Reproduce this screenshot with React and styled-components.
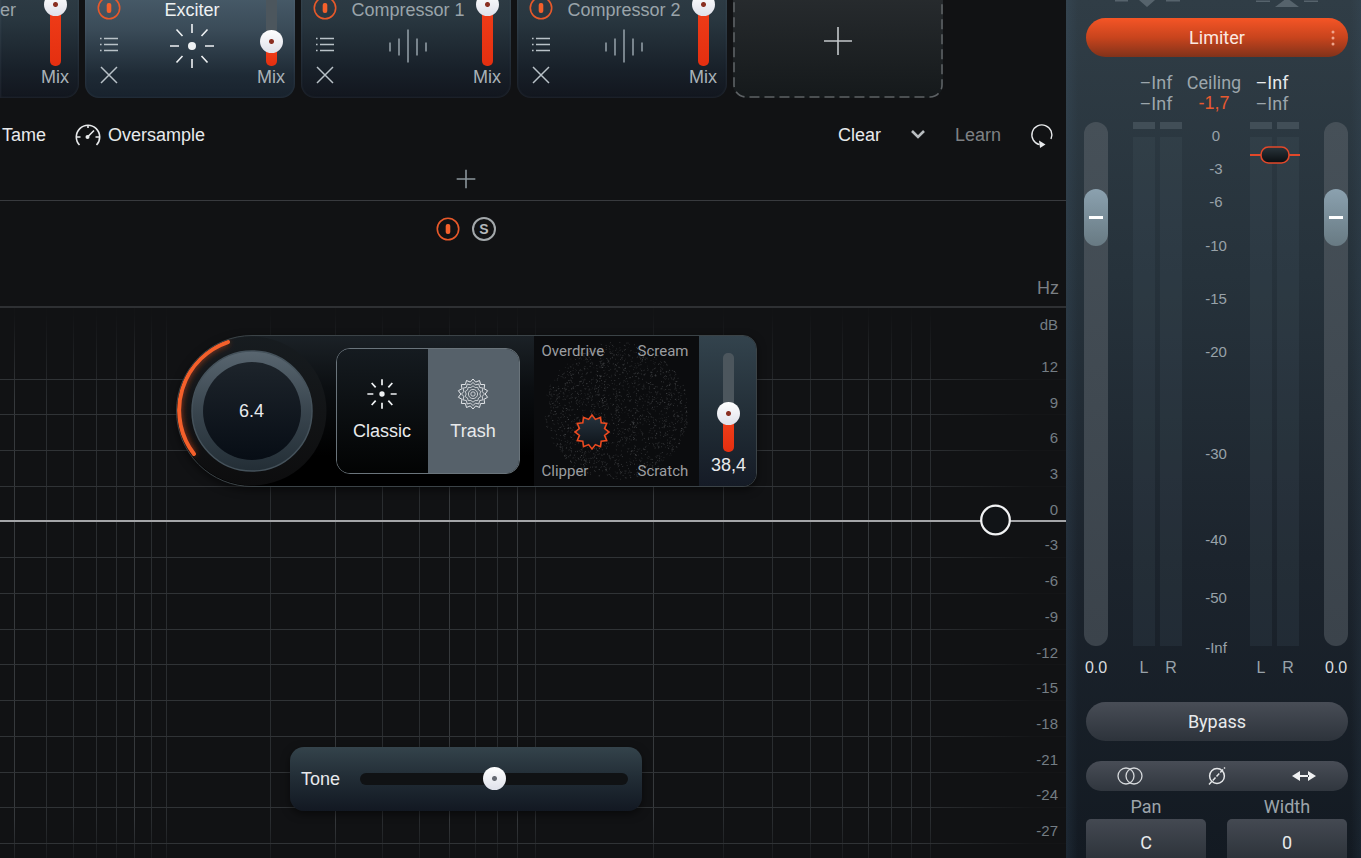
import React, { useState } from "react";
import styled, { createGlobalStyle } from "styled-components";

const GlobalStyle = createGlobalStyle`
  * {
    box-sizing: border-box;
  }

  body {
    margin: 0;
    background: #111214;
    color: #e8eaec;
    font-family: "Liberation Sans", Arial, sans-serif;
    font-size: 18px;
    line-height: 20px;
    overflow: hidden;
  }

  button,
  input {
    font: inherit;
    color: inherit;
  }

  button {
    padding: 0;
    border: none;
    background: none;
    cursor: pointer;
  }

  svg {
    display: block;
  }
`;

const Shell = styled.div`
  display: grid;
  grid-template-columns: minmax(0, 1fr) 295px;
  height: 100vh;
  overflow: hidden;
`;

const Main = styled.main`
  display: flex;
  flex-direction: column;
  min-width: 0;
  overflow: hidden;
`;

/* ---------- module chain ---------- */

const Chain = styled.div`
  display: flex;
  flex: none;
  gap: 6px;
  margin-top: -16px;
`;

const Card = styled.section`
  display: flex;
  flex: none;
  justify-content: space-between;
  width: ${(p) => (p.$clipped ? "79px" : "210px")};
  height: 114px;
  padding: 0 8px 0 ${(p) => (p.$clipped ? "0" : "12px")};
  border-radius: ${(p) => (p.$clipped ? "0 0 14px 0" : "14px")};
  box-shadow: inset 0 0 2px 1px rgba(120, 140, 155, 0.12);
  background: ${(p) =>
    p.$active
      ? "linear-gradient(#4c606e, #3a4b58 40%, #1e2a35 80%, #18222d)"
      : "linear-gradient(#303d46, #293740 30%, #182029 75%, #12161e)"};
  color: ${(p) => (p.$active ? "#eef1f3" : "#9aa4aa")};
`;

const CardActions = styled.div`
  display: flex;
  flex-direction: column;
  gap: 10px;
  width: 24px;
  margin-right: 8px;
  padding-top: 12px;
  color: #b9c2c8;
`;

const CardBody = styled.div`
  display: flex;
  flex: ${(p) => (p.$clipped ? "none" : "1")};
  flex-direction: column;
  align-items: center;
  gap: 2px;
  padding-top: 16px;
  white-space: nowrap;
`;

const CardMix = styled.label`
  display: flex;
  flex: none;
  flex-direction: column;
  align-items: center;
  gap: 1px;
  width: 32px;
  padding-top: 9px;
  color: #a9b2b8;
`;

const AddCard = styled.button`
  position: relative;
  display: grid;
  place-items: center;
  flex: none;
  width: 210px;
  height: 114px;
  border-radius: 14px;
  background: linear-gradient(#292d30, #15191b);
  color: #c3c7ca;
`;

const DashedFrame = styled.svg`
  position: absolute;
  inset: 0;
`;

/* ---------- sliders ---------- */

const VerticalRange = styled.input.attrs({ type: "range" })`
  appearance: none;
  writing-mode: vertical-lr;
  direction: rtl;
  width: 23px;
  height: ${(p) => p.$length}px;
  margin: 0;
  background: none;

  &::-webkit-slider-runnable-track {
    width: 11px;
    height: 100%;
    border-radius: 5px;
    background: linear-gradient(
      to top,
      #e42f10,
      #f2401a ${(p) => p.value}%,
      #4c565d ${(p) => p.value}%
    );
  }

  &::-webkit-slider-thumb {
    appearance: none;
    width: 23px;
    height: 23px;
    margin-left: -6px;
    border-radius: 50%;
    background: radial-gradient(circle, #8a2f22 2px, transparent 3px),
      linear-gradient(#ffffff, #dfe1ea);
  }
`;

const ToneRange = styled.input.attrs({ type: "range" })`
  appearance: none;
  flex: 1;
  min-width: 0;
  height: 24px;
  margin: 0;
  background: none;

  &::-webkit-slider-runnable-track {
    height: 12px;
    border-radius: 6px;
    background: #101214;
  }

  &::-webkit-slider-thumb {
    appearance: none;
    width: 23px;
    height: 23px;
    margin-top: -6px;
    border-radius: 50%;
    background: radial-gradient(circle, #666a72 2px, transparent 3px),
      linear-gradient(#ffffff, #dfe1ea);
  }
`;

const FaderRange = styled.input.attrs({ type: "range" })`
  appearance: none;
  writing-mode: vertical-lr;
  direction: rtl;
  width: 24px;
  height: 524px;
  margin: 0;
  border-radius: 12px;
  background: linear-gradient(#465058, #3b434b);

  &::-webkit-slider-thumb {
    appearance: none;
    width: 24px;
    height: 57px;
    border-radius: 12px;
    background: linear-gradient(#ffffff, #ffffff) center / 14px 3px no-repeat,
      linear-gradient(#8ba1af, #687a83);
  }
`;

/* ---------- toolbar and band header ---------- */

const Toolbar = styled.div`
  display: flex;
  flex: none;
  align-items: center;
  height: 60px;
  padding: 13px 12px 0 2px;
`;

const ToolButton = styled.button`
  display: flex;
  align-items: center;
  gap: 7px;
  margin-right: 29px;
  color: ${(p) => (p.$dim ? "#7e8184" : "#e8eaec")};
`;

const Spacer = styled.div`
  flex: 1;
`;

const AddBandRow = styled.div`
  display: grid;
  place-items: center;
  flex: none;
  height: 43px;
  padding-right: 134px;
  border-bottom: 1px solid #383a3e;
  color: #8b959b;
`;

const BandHeader = styled.div`
  position: relative;
  display: flex;
  flex: none;
  justify-content: center;
  gap: 12px;
  height: 107px;
  padding: 16px 134px 0 0;
  border-bottom: 2px solid #2e3033;
`;

const SoloButton = styled.button`
  width: 24px;
  height: 24px;
  border: 2px solid #a3a8ab;
  border-radius: 50%;
  color: #b4b8bb;
  font-size: 14px;
  font-weight: bold;
  line-height: 20px;
`;

const Unit = styled.span`
  position: absolute;
  right: 7px;
  bottom: 8px;
  color: #7b7f84;
`;

/* ---------- graph ---------- */

const Graph = styled.div`
  position: relative;
  display: grid;
  grid-template-columns: minmax(0, 1fr) 134px;
  flex: 1;
`;

const GridLines = styled.svg`
  position: absolute;
  inset: 0;
`;

const Plot = styled.div`
  position: relative;
  display: flex;
  flex-direction: column;
  align-items: center;
  justify-content: space-between;
  padding: 27px 0 47px;
`;

const DbScale = styled.div`
  position: relative;
  padding: 7px 8px 0 0;
  color: #747d84;
  font-size: 15px;
  text-align: right;
`;

const DbSteps = styled.div`
  display: grid;
  grid-template-rows: repeat(14, 1fr);
  align-items: center;
  height: 500px;
  margin-top: 14px;
`;

const ExciterPanel = styled.section`
  display: flex;
  align-items: center;
  flex: none;
  height: 152px;
  border: 1px solid #3b4347;
  border-radius: 76px 14px 14px 76px;
  overflow: hidden;
  background: linear-gradient(#1b2126, #0b0e11 35%, #000000 80%);
  box-shadow: 0 3px 8px rgba(0, 0, 0, 0.5);
`;

const Knob = styled.div`
  position: relative;
  display: grid;
  place-items: center;
  width: 150px;
  height: 150px;
`;

const KnobFace = styled.svg`
  position: absolute;
  inset: 0;
`;

const KnobValue = styled.span`
  position: relative;
`;

const ModeSwitch = styled.div`
  display: grid;
  grid-template-columns: 1fr 1fr;
  width: 184px;
  height: 126px;
  margin: 0 14px 0 9px;
  border: 1px solid #6a747b;
  border-radius: 14px;
  overflow: hidden;
`;

const ModeButton = styled.button`
  display: flex;
  flex-direction: column;
  align-items: center;
  justify-content: center;
  gap: 11px;
  padding-bottom: 3px;
  background: ${(p) => (p.$on ? "#56616a" : "linear-gradient(#151b20, #020303)")};
`;

const Pad = styled.div`
  position: relative;
  display: grid;
  grid-template-columns: auto auto;
  justify-content: space-between;
  align-content: space-between;
  width: 165px;
  height: 150px;
  padding: 5px 10px 5px 8px;
  background: #0b0c0e;
  color: #9c9ea1;
  font-family: Roboto, sans-serif;
  font-size: 15px;
`;

const PadField = styled.svg`
  position: absolute;
  inset: 0;
`;

const PadLabel = styled.span`
  position: relative;
`;

const MixColumn = styled.label`
  display: flex;
  flex-direction: column;
  align-items: center;
  gap: 3px;
  width: 57px;
  height: 150px;
  padding: 17px 0 0 3px;
  background: linear-gradient(#33434d, #202b34 60%, #151b26);
`;

const TonePanel = styled.label`
  display: flex;
  align-items: center;
  flex: none;
  gap: 20px;
  width: 352px;
  height: 64px;
  padding: 0 14px 0 11px;
  border-radius: 14px;
  background: linear-gradient(#34434b, #212c35 50%, #121822);
  box-shadow: 0 3px 8px rgba(0, 0, 0, 0.5);
`;

/* ---------- output panel ---------- */

const Output = styled.aside`
  display: flex;
  flex-direction: column;
  padding: 0 13px 0 18px;
  overflow: hidden;
  background: linear-gradient(
      to right,
      rgba(72, 100, 125, 0.18),
      transparent 12px,
      transparent 285px,
      rgba(72, 100, 125, 0.12)
    ),
    linear-gradient(#303d46, #26323b 32%, #1c242d 65%, #131a22);
`;

const InOutIcons = styled.svg`
  flex: none;
  width: 264px;
  height: 18px;
`;

const LimiterButton = styled.button`
  display: grid;
  grid-template-columns: 30px 1fr 30px;
  align-items: center;
  flex: none;
  height: 39px;
  margin-left: 2px;
  border-radius: 20px;
  background: linear-gradient(#f55526, #c8441d 50%, #81321a);
  font-family: Roboto, sans-serif;
  color: #fbe9e2;
`;

const Readouts = styled.div`
  display: grid;
  grid-template-columns: repeat(3, 58px);
  justify-content: center;
  margin: 15px 0 8px;
  padding-right: 4px;
  font-family: Roboto, sans-serif;
  line-height: 21px;
  text-align: center;
  color: #9ca6ac;
`;

const PeakReadout = styled.span`
  color: #e8eaec;
`;

const CeilingReadout = styled.span`
  color: #e8592f;
  font-family: "Liberation Sans", Arial, sans-serif;
`;

const Mixer = styled.div`
  display: flex;
  justify-content: space-between;
  font-size: 16px;
`;

const FaderColumn = styled.label`
  display: flex;
  flex-direction: column;
  align-items: center;
  gap: 12px;
  width: 24px;
  color: #d8dcdf;
`;

const Meters = styled.div`
  display: grid;
  grid-template-columns: 49px 1fr 49px;
  width: 166px;
  color: #98a2a9;
`;

const MeterPair = styled.div`
  position: relative;
  display: flex;
  justify-content: space-between;
`;

const Meter = styled.div`
  display: flex;
  flex-direction: column;
  align-items: center;
  width: 22px;
`;

const MeterCap = styled.div`
  width: 100%;
  height: 7px;
  margin-bottom: 8px;
  background: #414e57;
`;

const MeterBar = styled.div`
  width: 100%;
  height: 509px;
  margin-bottom: 12px;
  background: rgba(80, 98, 110, 0.16);
`;

const CeilingHandle = styled.svg`
  position: absolute;
  top: 24px;
  left: 0;
`;

const Scale = styled.div`
  padding-top: 4px;
  font-size: 15px;
  text-align: center;
`;

const ScaleStep = styled.div`
  margin-top: ${(p) => p.$gap}px;
`;

const BypassButton = styled.button`
  flex: none;
  height: 39px;
  margin: 24px 0 20px 2px;
  border-radius: 20px;
  background: linear-gradient(#484d56, #2d333b);
  font-family: Roboto, sans-serif;
`;

const StereoBar = styled.div`
  display: grid;
  grid-template-columns: repeat(3, 1fr);
  flex: none;
  height: 30px;
  margin-left: 2px;
  border-radius: 15px;
  background: linear-gradient(#484d56, #30363e);
`;

const StereoButton = styled.button`
  display: grid;
  place-items: center;
`;

const Fields = styled.div`
  display: flex;
  justify-content: space-between;
  margin: 6px 1px 0 2px;
  font-family: Roboto, sans-serif;
`;

const Field = styled.label`
  display: flex;
  flex-direction: column;
  gap: 2px;
  width: 120px;
  text-align: center;
  color: #9ca4aa;
`;

const FieldInput = styled.input`
  width: 100%;
  height: 46px;
  padding: 0;
  border: none;
  border-radius: 5px;
  background: linear-gradient(#444952, #2a3037);
  color: #e8eaec;
  text-align: center;
`;

/* ---------- icons ---------- */

const PowerIcon = () => (
  <svg width="24" height="24" viewBox="0 0 24 24" fill="none">
    <circle cx="12" cy="12" r="10.7" stroke="#e8592a" strokeWidth="1.6" />
    <rect x="9.7" y="7" width="4.6" height="10" rx="2" fill="#f4602b" />
  </svg>
);

const ListIcon = () => (
  <svg width="24" height="24" viewBox="0 0 24 24" stroke="currentColor" strokeWidth="1.4">
    <path d="M7 8.5h14M7 14.5h14M7 20.5h14" />
    <path d="M3 8.5h1.6M3 14.5h1.6M3 20.5h1.6" />
  </svg>
);

const CrossIcon = () => (
  <svg width="24" height="24" viewBox="0 0 24 24" stroke="currentColor" strokeWidth="1.5">
    <path d="M4 3l16 16M20 3L4 19" />
  </svg>
);

const PlusIcon = ({ size }) => (
  <svg width={size} height={size} viewBox="0 0 30 30" stroke="currentColor">
    <path d="M15 1v28M1 15h28" strokeWidth={size > 20 ? 1.6 : 2.4} />
  </svg>
);

const BurstIcon = ({ size }) => (
  <svg
    width={size}
    height={size}
    viewBox="-24 -24 48 48"
    stroke="#eef1f3"
    strokeWidth={size > 40 ? 1.6 : 2.6}
  >
    <circle r="4" fill="#eef1f3" stroke="none" />
    <path d="M0-22v9M0 22v-9M-22 0h9M22 0h-9" />
    <path d="M-15.5-16.5l6 6.5M15.5-16.5l-6 6.5M-15.5 16.5l6-6.5M15.5 16.5l-6-6.5" />
  </svg>
);

const WaveIcon = () => (
  <svg width="48" height="48" viewBox="-24 -24 48 48" stroke="#9fabb3" strokeWidth="1.4">
    <path d="M-18-3.5v9M-9-7.5v17M0-16.5v33M9-7.5v17M18-3.5v9" />
  </svg>
);

const starPoints = (spikes, outer, inner, cx = 0, cy = 0) => {
  const points = [];
  for (let i = 0; i < spikes * 2; i++) {
    const r = i % 2 ? inner : outer;
    const a = (Math.PI * i) / spikes - Math.PI / 2;
    points.push(`${(cx + r * Math.cos(a)).toFixed(1)},${(cy + r * Math.sin(a)).toFixed(1)}`);
  }
  return points.join(" ");
};

const TrashIcon = () => (
  <svg width="32" height="32" viewBox="-16 -16 32 32" fill="none" stroke="#e4e7ea">
    <polygon points={starPoints(14, 15, 12.2)} />
    <polygon points={starPoints(12, 11.6, 9.4)} strokeWidth="0.9" />
    <polygon points={starPoints(10, 8.2, 6.8)} strokeWidth="0.8" />
    <circle r="4.6" strokeWidth="0.8" />
    <circle r="2.2" strokeWidth="0.8" />
  </svg>
);

const GaugeIcon = () => (
  <svg width="26" height="24" viewBox="0 0 26 24" fill="none" stroke="currentColor" strokeWidth="1.6">
    <path d="M4.5 22A11.7 11.7 0 1 1 21.5 22" />
    <path d="M13 2v3M1.5 14h4M20.5 14h4M12.5 14l6.500-6.500" />
    <circle cx="12.5" cy="14" r="2" fill="currentColor" stroke="none" />
  </svg>
);

const ChevronIcon = () => (
  <svg width="16" height="12" viewBox="0 0 16 12" fill="none" stroke="#b9bdc0" strokeWidth="2.6">
    <path d="M2 2l6 6 6-6" />
  </svg>
);

const LoopIcon = () => (
  <svg width="24" height="26" viewBox="0 0 24 26" fill="none" stroke="#e8eaec" strokeWidth="1.4">
    <path d="M9.5 22.6A10 10 0 1 1 21 17" />
    <path d="M9 18.500l6.500 4-5.500 3.500z" fill="#e8eaec" stroke="none" />
  </svg>
);

/* ---------- graph drawing ---------- */

const VERTICALS = [
  14, 46, 73, 96, 116, 134, 151, 166, 270, 335, 382, 419, 449, 475, 497, 517, 535, 653, 723, 772,
  810, 842, 868, 891, 911, 930,
];
const HORIZONTALS = [71, 106, 142, 178, 249, 285, 321, 356, 392, 428, 464, 499, 535];

const BRIGHT = [14, 134, 335, 449, 517, 653, 868];

const GraphLines = () => (
  <GridLines width="100%" height="100%">
    <defs>
      <linearGradient id="fadeY" x1="0" y1="0" x2="0" y2="550" gradientUnits="userSpaceOnUse">
        <stop offset="0.01" stopColor="#fff" stopOpacity="0.05" />
        <stop offset="0.17" stopColor="#fff" />
        <stop offset="0.93" stopColor="#fff" />
        <stop offset="1" stopColor="#fff" stopOpacity="0.35" />
      </linearGradient>
      <linearGradient id="fadeX" x1="0" y1="0" x2="1066" y2="0" gradientUnits="userSpaceOnUse">
        <stop offset="0.86" stopColor="#fff" />
        <stop offset="0.97" stopColor="#fff" stopOpacity="0.1" />
      </linearGradient>
      <mask id="maskY" maskUnits="userSpaceOnUse" x="0" y="0" width="100%" height="100%">
        <rect width="100%" height="100%" fill="url(#fadeY)" />
      </mask>
      <mask id="maskX" maskUnits="userSpaceOnUse" x="0" y="0" width="100%" height="100%">
        <rect width="100%" height="100%" fill="url(#fadeX)" />
      </mask>
    </defs>
    <g mask="url(#maskY)">
      {VERTICALS.map((x) => (
        <rect key={x} x={x} y="0" width="1" height="100%" fill={BRIGHT.includes(x) ? "#36393c" : "#2a2d30"} />
      ))}
    </g>
    <g mask="url(#maskX)">
      {HORIZONTALS.map((y) => (
        <rect key={y} x="0" y={y} width="100%" height="1" fill="#303336" />
      ))}
    </g>
    <rect x="0" y="212" width="100%" height="2" fill="#a4a5a8" />
    <circle cx="995.5" cy="212" r="14.3" fill="#111417" stroke="#f2f3f4" strokeWidth="2.2" />
  </GridLines>
);

// dust cloud behind the trash selector, same spread on every render
const buildDust = () => {
  let seed = 7;
  const rand = () => {
    seed = (seed * 16807) % 2147483647;
    return seed / 2147483647;
  };
  let d = "";
  for (let i = 0; i < 1900; i++) {
    const r = 72 * Math.sqrt(rand());
    const a = rand() * Math.PI * 2;
    const x = 83 + r * Math.cos(a);
    const y = 75 + r * Math.sin(a) * 0.95;
    d += `M${x.toFixed(1)} ${y.toFixed(1)}l${(rand() * 2 - 1).toFixed(1)} ${(rand() * 2 - 1).toFixed(1)}`;
  }
  return d;
};
const DUST = buildDust();

const KnobDrawing = () => (
  <KnobFace width="150" height="150" viewBox="0 0 150 150" fill="none">
    <defs>
      <linearGradient id="knobBase" x1="0" y1="0" x2="0" y2="1">
        <stop stopColor="#171c20" />
        <stop offset="0.5" stopColor="#121416" />
        <stop offset="1" stopColor="#0d0d0e" />
      </linearGradient>
      <linearGradient id="knobRing" x1="0" y1="0" x2="0" y2="1">
        <stop stopColor="#596670" />
        <stop offset="0.5" stopColor="#39454e" />
        <stop offset="1" stopColor="#232e36" />
      </linearGradient>
      <linearGradient id="knobFace" x1="0" y1="0" x2="0" y2="1">
        <stop stopColor="#1d242b" />
        <stop offset="1" stopColor="#070d15" />
      </linearGradient>
      <filter id="glow" x="-30%" y="-30%" width="160%" height="160%">
        <feGaussianBlur stdDeviation="3" />
      </filter>
    </defs>
    <circle cx="75" cy="75" r="74.5" fill="url(#knobBase)" />
    <path d="M51 6A72 72 0 0 0 17 118" stroke="#f0501c" strokeOpacity="0.6" strokeWidth="5" filter="url(#glow)" />
    <circle cx="75" cy="75" r="60" fill="url(#knobRing)" stroke="#45525b" strokeWidth="1.5" />
    <circle cx="75" cy="75" r="49" fill="url(#knobFace)" />
    <path d="M51 6A72 72 0 0 0 17 118" stroke="#f4602b" strokeWidth="4" strokeLinecap="round" />
  </KnobFace>
);

/* ---------- parts ---------- */

const MixSlider = ({ length, initial, label }) => {
  const [value, setValue] = useState(initial);
  return (
    <VerticalRange
      $length={length}
      value={value}
      aria-label={label}
      onChange={(e) => setValue(Number(e.target.value))}
    />
  );
};

const ModuleCard = ({ name, mix, active, clipped, icon }) => (
  <Card $active={active} $clipped={clipped}>
    {!clipped && (
      <CardActions>
        <button aria-label={`${name} power`}>
          <PowerIcon />
        </button>
        <button aria-label={`${name} presets`}>
          <ListIcon />
        </button>
        <button aria-label={`Remove ${name}`}>
          <CrossIcon />
        </button>
      </CardActions>
    )}
    <CardBody $clipped={clipped}>
      {name}
      {icon}
    </CardBody>
    <CardMix>
      <MixSlider length={73} initial={mix} />
      Mix
    </CardMix>
  </Card>
);

const MODES = [
  { name: "Classic", icon: <BurstIcon size={32} /> },
  { name: "Trash", icon: <TrashIcon /> },
];

const Exciter = () => {
  const [mode, setMode] = useState("Trash");
  return (
    <ExciterPanel>
      <Knob role="slider" tabIndex={0} aria-label="Amount" aria-valuenow={6.4}>
        <KnobDrawing />
        <KnobValue>6.4</KnobValue>
      </Knob>
      <ModeSwitch>
        {MODES.map(({ name, icon }) => (
          <ModeButton
            key={name}
            $on={mode === name}
            aria-pressed={mode === name}
            onClick={() => setMode(name)}
          >
            {icon}
            {name}
          </ModeButton>
        ))}
      </ModeSwitch>
      <Pad>
        <PadField width="165" height="150" fill="none">
          <defs>
            <linearGradient id="starFill" x1="0" y1="0" x2="0" y2="1">
              <stop stopColor="#27343f" />
              <stop offset="1" stopColor="#0c1117" />
            </linearGradient>
          </defs>
          <path d={DUST} stroke="#8b8d90" strokeOpacity="0.42" strokeWidth="0.8" />
          <polygon
            points={starPoints(12, 17, 13, 58, 96)}
            fill="url(#starFill)"
            stroke="#ea4a20"
            strokeWidth="1.6"
          />
        </PadField>
        <PadLabel>Overdrive</PadLabel>
        <PadLabel>Scream</PadLabel>
        <PadLabel>Clipper</PadLabel>
        <PadLabel>Scratch</PadLabel>
      </Pad>
      <MixColumn>
        <MixSlider length={99} initial={36} label="Exciter mix" />
        38,4
      </MixColumn>
    </ExciterPanel>
  );
};

const DB_STEPS = [12, 9, 6, 3, 0, -3, -6, -9, -12, -15, -18, -21, -24, -27];

const SCALE = [
  ["0", 0],
  ["-3", 13],
  ["-6", 13],
  ["-10", 24],
  ["-15", 33],
  ["-20", 33],
  ["-30", 82],
  ["-40", 66],
  ["-50", 38],
  ["-Inf", 30],
];

const Fader = ({ label }) => {
  const [value, setValue] = useState(85.7);
  return (
    <FaderColumn>
      <FaderRange
        step="0.1"
        value={value}
        aria-label={label}
        onChange={(e) => setValue(Number(e.target.value))}
      />
      0.0
    </FaderColumn>
  );
};

const MeterSet = ({ children }) => (
  <MeterPair>
    {["L", "R"].map((channel) => (
      <Meter key={channel}>
        <MeterCap />
        <MeterBar />
        {channel}
      </Meter>
    ))}
    {children}
  </MeterPair>
);

const OutputPanel = () => (
  <Output>
    <InOutIcons viewBox="0 0 264 18" fill="#56636c">
      <path d="M55 0h16l-8 7zM31 0h13v1.5H31zM82 0h14v1.5H82z" />
      <path d="M191 7l12-9 12 9zM172 0.5h14v1.5h-14zM220 0.5h14v1.5h-14z" />
    </InOutIcons>
    <LimiterButton>
      <span />
      Limiter
      <svg width="30" height="18" viewBox="0 0 30 18" fill="#f0a58c">
        <circle cx="15" cy="3" r="1.5" />
        <circle cx="15" cy="9" r="1.5" />
        <circle cx="15" cy="15" r="1.5" />
      </svg>
    </LimiterButton>
    <Readouts>
      <span>–Inf</span>
      <span>Ceiling</span>
      <PeakReadout>–Inf</PeakReadout>
      <span>–Inf</span>
      <CeilingReadout>-1,7</CeilingReadout>
      <span>–Inf</span>
    </Readouts>
    <Mixer>
      <Fader label="Input gain" />
      <Meters>
        <MeterSet />
        <Scale>
          {SCALE.map(([text, gap]) => (
            <ScaleStep key={text} $gap={gap}>
              {text}
            </ScaleStep>
          ))}
        </Scale>
        <MeterSet>
          <CeilingHandle width="50" height="18" fill="none" stroke="#e2482a" strokeWidth="2">
            <defs>
              <linearGradient id="handleFill" x1="0" y1="0" x2="0" y2="1">
                <stop stopColor="#2a353c" />
                <stop offset="1" stopColor="#0a0d10" />
              </linearGradient>
            </defs>
            <path d="M0 9h50" />
            <rect x="11" y="1" width="28" height="16" rx="7.5" fill="url(#handleFill)" strokeWidth="1.6" />
          </CeilingHandle>
        </MeterSet>
      </Meters>
      <Fader label="Output gain" />
    </Mixer>
    <BypassButton>Bypass</BypassButton>
    <StereoBar>
      <StereoButton aria-label="Stereo link">
        <svg width="26" height="18" viewBox="0 0 26 18" fill="none" stroke="#d5d8db" strokeWidth="1.3">
          <circle cx="9" cy="9" r="8" />
          <circle cx="17" cy="9" r="8" />
        </svg>
      </StereoButton>
      <StereoButton aria-label="Invert phase">
        <svg width="20" height="18" viewBox="0 0 20 18" fill="none" stroke="#e4e6e8" strokeWidth="1.5">
          <circle cx="10" cy="9" r="7.4" />
          <path d="M2 17.500L18 0.500" strokeDasharray="4 1.500" />
        </svg>
      </StereoButton>
      <StereoButton aria-label="Swap channels">
        <svg width="24" height="12" viewBox="0 0 24 12" fill="#f0f1f2">
          <path d="M0 6l8-5v10zM24 6l-8-5v10zM7 5h10v2H7z" />
        </svg>
      </StereoButton>
    </StereoBar>
    <Fields>
      <Field>
        Pan
        <FieldInput type="text" defaultValue="C" />
      </Field>
      <Field>
        Width
        <FieldInput type="text" defaultValue="0" />
      </Field>
    </Fields>
  </Output>
);

const App = () => {
  const [tone, setTone] = useState(50);
  return (
    <>
      <GlobalStyle />
      <Shell>
        <Main>
          <Chain>
            <ModuleCard name="er" mix={100} clipped />
            <ModuleCard name="Exciter" mix={26} active icon={<BurstIcon size={48} />} />
            <ModuleCard name="Compressor 1" mix={100} icon={<WaveIcon />} />
            <ModuleCard name="Compressor 2" mix={100} icon={<WaveIcon />} />
            <AddCard aria-label="Add module">
              <DashedFrame width="210" height="114" fill="none">
                <rect x="1" y="1" width="208" height="112" rx="12" stroke="#5d6164" strokeWidth="1.6" strokeDasharray="10 5" />
              </DashedFrame>
              <PlusIcon size={30} />
            </AddCard>
          </Chain>
          <Toolbar>
            <ToolButton>Tame</ToolButton>
            <ToolButton>
              <GaugeIcon />
              Oversample
            </ToolButton>
            <Spacer />
            <ToolButton>Clear</ToolButton>
            <ToolButton aria-label="More">
              <ChevronIcon />
            </ToolButton>
            <ToolButton $dim>Learn</ToolButton>
            <button aria-label="Reset">
              <LoopIcon />
            </button>
          </Toolbar>
          <AddBandRow>
            <button aria-label="Add band">
              <PlusIcon size={20} />
            </button>
          </AddBandRow>
          <BandHeader>
            <div>
              <button aria-label="Band power">
                <PowerIcon />
              </button>
            </div>
            <SoloButton aria-label="Solo">S</SoloButton>
            <Unit>Hz</Unit>
          </BandHeader>
          <Graph>
            <GraphLines />
            <Plot>
              <Exciter />
              <TonePanel>
                Tone
                <ToneRange value={tone} onChange={(e) => setTone(Number(e.target.value))} />
              </TonePanel>
            </Plot>
            <DbScale>
              dB
              <DbSteps>
                {DB_STEPS.map((step) => (
                  <span key={step}>{step}</span>
                ))}
              </DbSteps>
            </DbScale>
          </Graph>
        </Main>
        <OutputPanel />
      </Shell>
    </>
  );
};

export default App;
